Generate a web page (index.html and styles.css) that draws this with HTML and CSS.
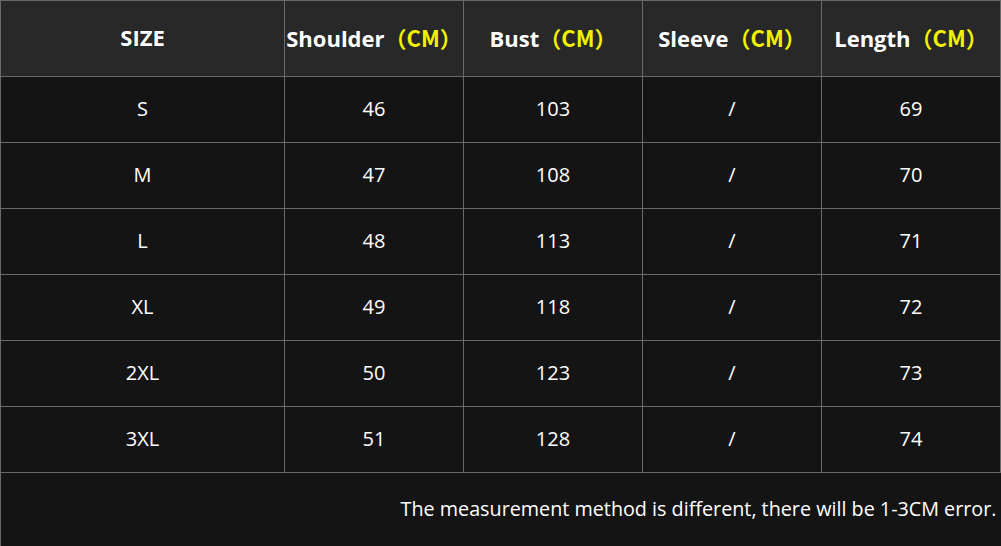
FILE: index.html
```html
<!DOCTYPE html>
<html lang="en">
<head>
<meta charset="utf-8">
<title>Size chart</title>
<link rel="stylesheet" href="styles.css">
</head>
<body>
<table class="chart">
  <colgroup>
    <col class="c-size">
    <col class="c-val">
    <col class="c-val">
    <col class="c-val">
    <col class="c-val">
  </colgroup>
  <thead>
    <tr>
      <th>SIZE</th>
      <th>Shoulder<span class="unit">（CM）</span></th>
      <th>Bust<span class="unit">（CM）</span></th>
      <th>Sleeve<span class="unit">（CM）</span></th>
      <th>Length<span class="unit">（CM）</span></th>
    </tr>
  </thead>
  <tbody>
    <tr><td>S</td><td>46</td><td>103</td><td>/</td><td>69</td></tr>
    <tr><td>M</td><td>47</td><td>108</td><td>/</td><td>70</td></tr>
    <tr><td>L</td><td>48</td><td>113</td><td>/</td><td>71</td></tr>
    <tr><td>XL</td><td>49</td><td>118</td><td>/</td><td>72</td></tr>
    <tr><td>2XL</td><td>50</td><td>123</td><td>/</td><td>73</td></tr>
    <tr><td>3XL</td><td>51</td><td>128</td><td>/</td><td>74</td></tr>
  </tbody>
  <tfoot>
    <tr><td colspan="5" class="note">The measurement method is different, there will be 1-3CM error.</td></tr>
  </tfoot>
</table>
</body>
</html>
```
FILE: styles.css
```css
html, body {
  margin: 0;
  padding: 0;
  background: #141414;
}
.chart {
  width: 1001px;
  border-collapse: collapse;
  table-layout: fixed;
  font-family: "Open Sans", "Noto Sans CJK SC", sans-serif;
  color: #ffffff;
}
.c-size { width: 284px; }
.c-val { width: 179px; }
.chart th, .chart td {
  border: 1px solid #6a6a6a;
  text-align: center;
  padding: 0;
  white-space: nowrap;
}
.chart th {
  background: #282828;
  height: 71px;
  padding-bottom: 4px;
  font-size: 22px;
  font-weight: 700;
}
.chart td {
  background: #141414;
  height: 62px;
  padding-bottom: 3px;
  font-size: 20px;
}
.unit {
  color: #f2f200;
  font-family: "Noto Sans CJK SC", sans-serif;
  font-weight: 700;
}
.chart td.note {
  height: 71px;
  padding-bottom: 2px;
  text-align: right;
  padding-right: 4px;
  font-size: 19.75px;
  border-right: none;
  border-bottom: none;
}
```
